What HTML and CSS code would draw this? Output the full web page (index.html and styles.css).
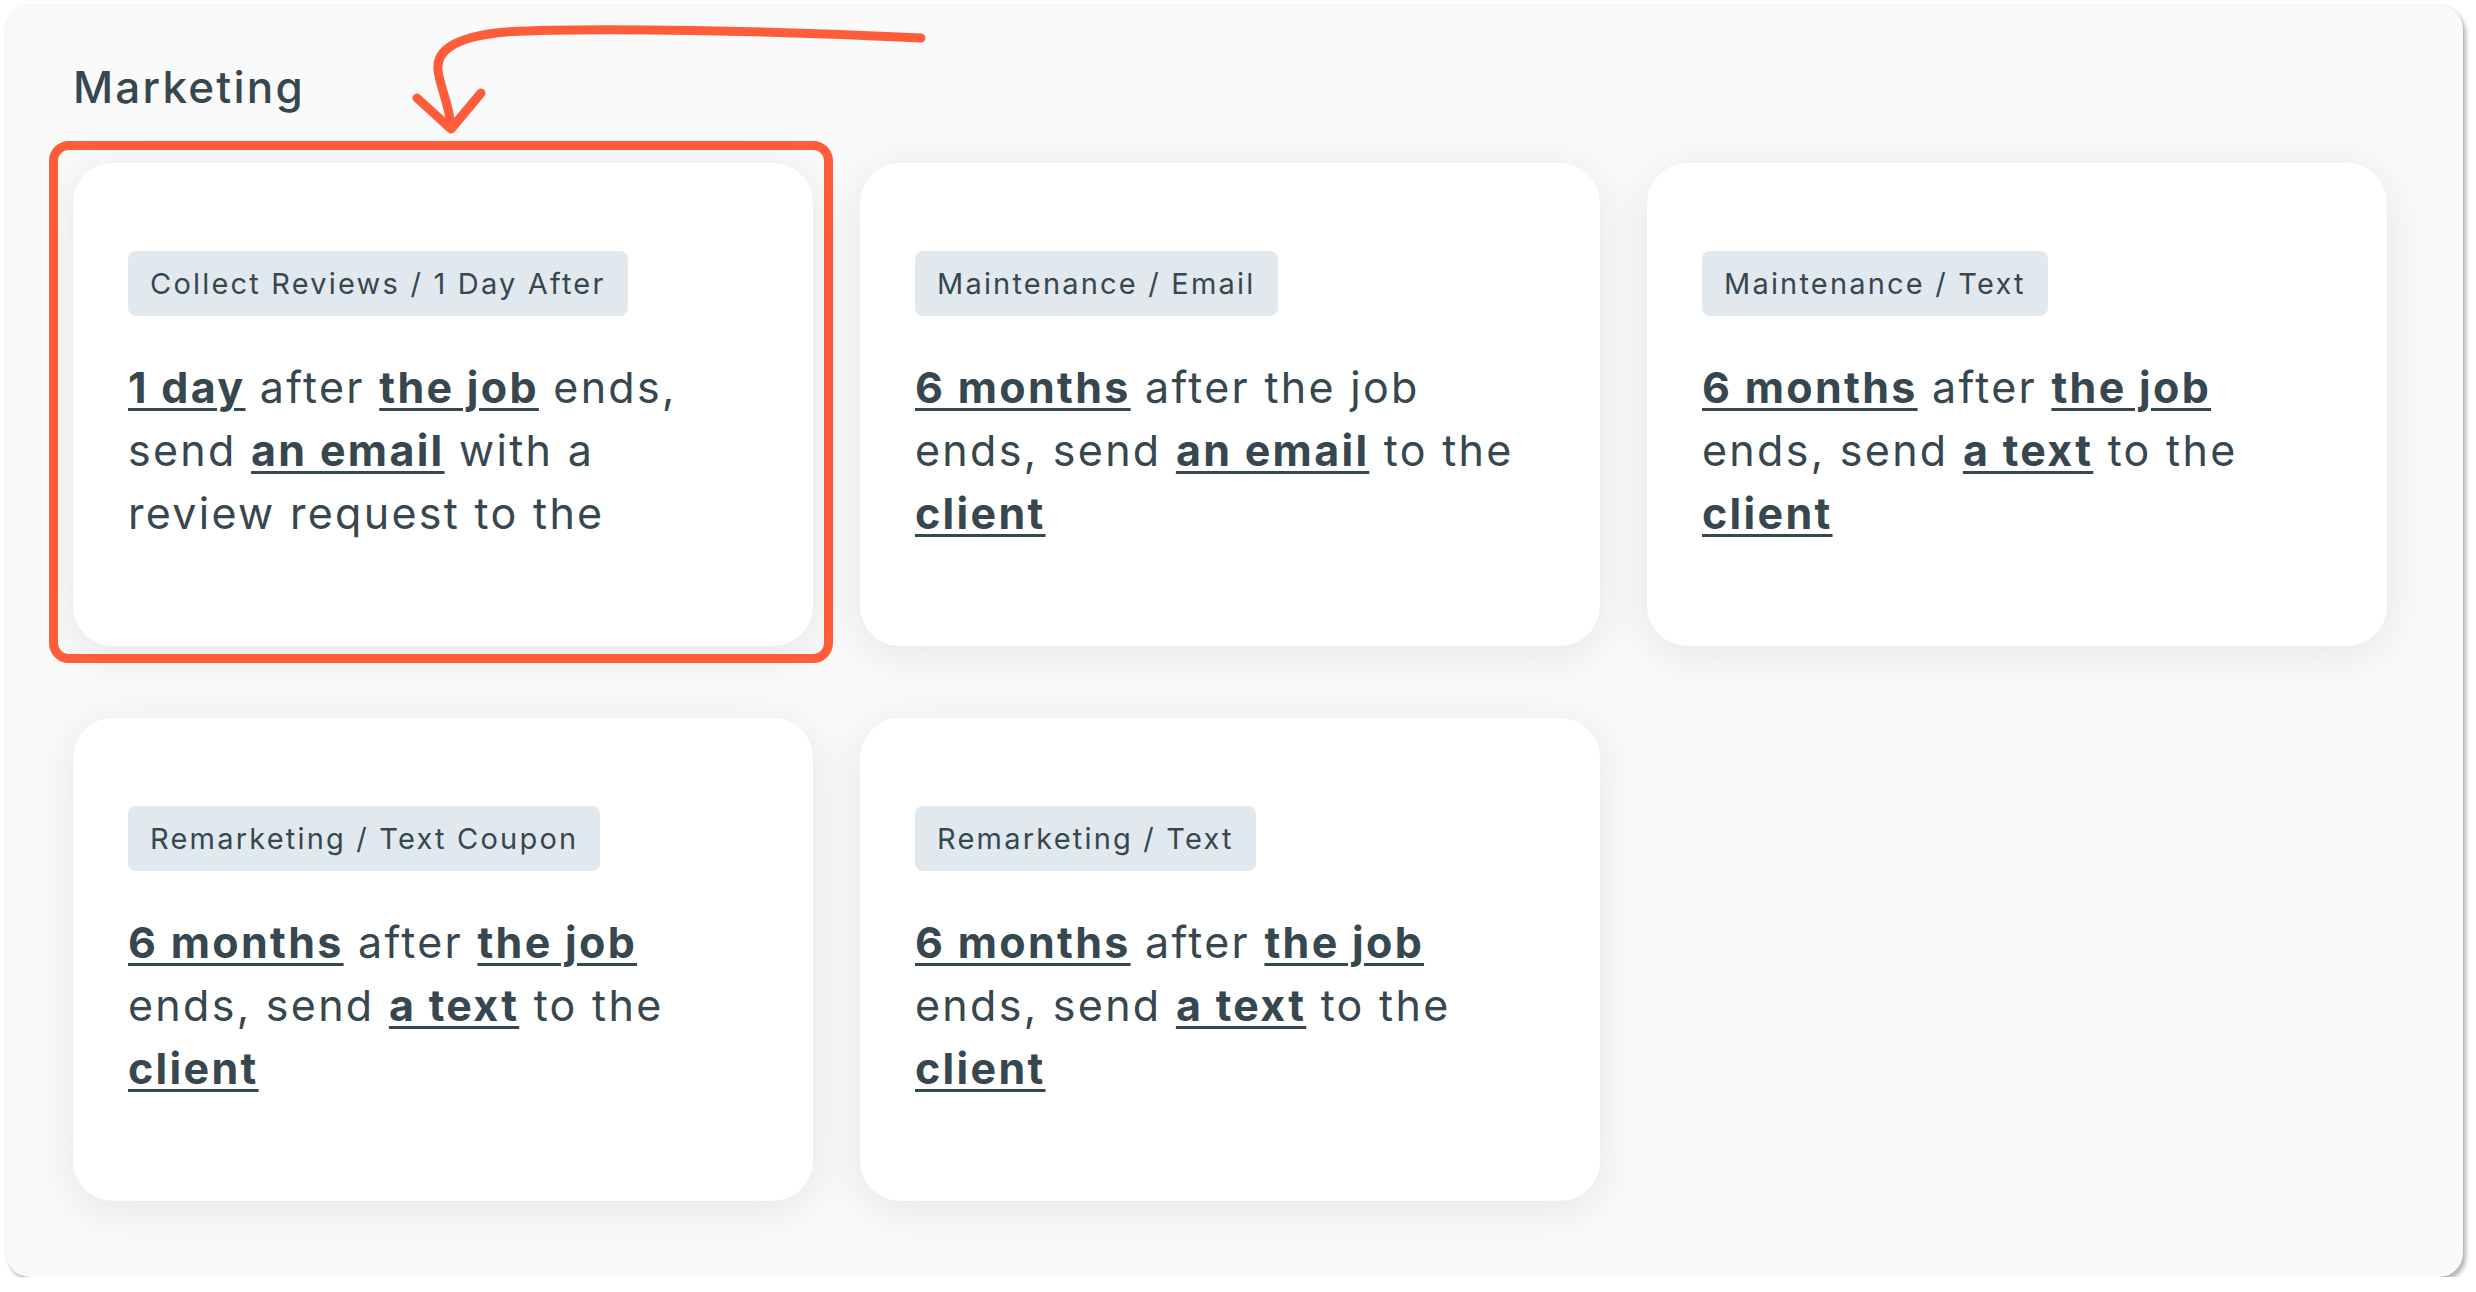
FILE: index.html
```html
<!DOCTYPE html>
<html lang="en">
<head>
    <meta charset="UTF-8">
    <meta name="viewport" content="width=device-width, initial-scale=1.0">
    <title>Marketing Automations</title>
    <link rel="stylesheet" href="styles.css">
</head>
<body>
    <div class="panel">
        <h2 class="section-title">Marketing</h2>

        <!-- hand drawn pointer to the first card -->
        <svg class="pointer" viewBox="406 25 540 130" width="540" height="130">
            <path d="M 921 38 C 780 31, 590 27, 505 32 C 452 37, 436 52, 438 70 C 440 88, 449 102, 451 127" />
            <path d="M 417 98 L 451 129 L 481 93" />
        </svg>

        <div class="card-grid">
            <div class="card card-highlight">
                <span class="tag">Collect Reviews / 1 Day After</span>
                <p class="rule"><b>1 day</b> after <b>the job</b> ends,<br>send <b>an email</b> with a<br>review request to the</p>
            </div>

            <div class="card">
                <span class="tag">Maintenance / Email</span>
                <p class="rule"><b>6 months</b> after the job<br>ends, send <b>an email</b> to the<br><b>client</b></p>
            </div>

            <div class="card">
                <span class="tag">Maintenance / Text</span>
                <p class="rule"><b>6 months</b> after <b>the job</b><br>ends, send <b>a text</b> to the<br><b>client</b></p>
            </div>

            <div class="card">
                <span class="tag">Remarketing / Text Coupon</span>
                <p class="rule"><b>6 months</b> after <b>the job</b><br>ends, send <b>a text</b> to the<br><b>client</b></p>
            </div>

            <div class="card">
                <span class="tag">Remarketing / Text</span>
                <p class="rule"><b>6 months</b> after <b>the job</b><br>ends, send <b>a text</b> to the<br><b>client</b></p>
            </div>
        </div>
    </div>
</body>
</html>
```

FILE: styles.css
```css
* {
    margin: 0;
    padding: 0;
    box-sizing: border-box;
}

body {
    font-family: Inter, "Noto Sans", sans-serif;
    background: #fff;
    color: #37474f;
    padding: 5px 0 0 6px;
}

.panel {
    position: relative;
    width: 2457px;
    height: 1272px;
    padding: 49px 0 0 67px;
    background: #fafafa;
    border-radius: 24px;
    box-shadow: 3px 4px 4px rgba(0, 0, 0, 0.28), 0 0 2px rgba(0, 0, 0, 0.12);
}

.section-title {
    font-size: 44px;
    font-weight: 500;
    line-height: 66px;
    letter-spacing: 2.2px;
    margin-bottom: 43px;
}

.pointer {
    position: absolute;
    left: 400px;
    top: 20px;
    fill: none;
    stroke: #ff5c3a;
    stroke-width: 9;
    stroke-linecap: round;
    stroke-linejoin: round;
}

.card-grid {
    display: grid;
    grid-template-columns: repeat(3, 740px);
    column-gap: 47px;
    row-gap: 72px;
}

.card {
    position: relative;
    height: 483px;
    padding: 88px 55px 0;
    background: #fff;
    border-radius: 40px;
    box-shadow: 0 8px 48px rgba(0, 0, 0, 0.09);
}

.card-highlight::after {
    content: "";
    position: absolute;
    top: -22px;
    left: -24px;
    right: -20px;
    bottom: -17px;
    border: 9px solid #ff5c3a;
    border-radius: 20px;
}

.tag {
    display: inline-block;
    padding: 10px 22px;
    font-size: 29px;
    line-height: 45px;
    letter-spacing: 2.2px;
    background: #e1e9ef;
    border-radius: 8px;
}

.rule {
    margin-top: 40px;
    font-size: 43px;
    line-height: 63px;
    letter-spacing: 2.3px;
}

.rule b {
    font-weight: 700;
    text-decoration: underline;
    text-decoration-thickness: 3px;
    text-underline-offset: 5px;
}
```
